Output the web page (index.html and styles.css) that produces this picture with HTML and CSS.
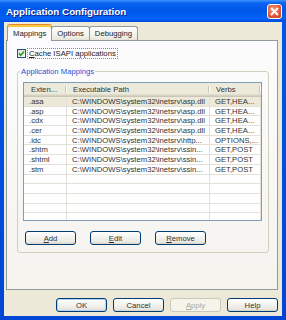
FILE: index.html
```html
<!DOCTYPE html>
<html lang="en">
<head>
    <meta charset="UTF-8">
    <meta name="viewport" content="width=device-width, initial-scale=1.0">
    <title>Application Configuration</title>
    <link rel="stylesheet" href="styles.css">
</head>
<body>
    <div class="window">
        <div class="titlebar">
            <span class="title">Application Configuration</span>
            <button class="close" type="button" aria-label="Close">
                <svg width="13" height="13" viewBox="0 0 13 13"><path d="M3.5 3.5 L9.5 9.5 M9.5 3.5 L3.5 9.5" stroke="#fff" stroke-width="1.8" stroke-linecap="round"/></svg>
            </button>
        </div>
        <div class="frame">
            <div class="tabs">
                <div class="tab active">Mappings</div>
                <div class="tab">Options</div>
                <div class="tab">Debugging</div>
            </div>
            <div class="panel">
                <div class="check">
                    <span class="box"><svg width="7" height="7" viewBox="0 0 7 7"><path d="M1 3.4 L2.8 5.3 L6 1.4" fill="none" stroke="#21a121" stroke-width="1.6"/></svg></span>
                    <span class="check-label"><u>C</u>ache ISAPI applications</span>
                </div>
                <fieldset class="group">
                    <legend>Application Mappings</legend>
                    <div class="list">
                        <div class="list-head">
                            <div class="hcell c1">Exten...</div>
                            <div class="hcell c2">Executable Path</div>
                            <div class="hcell c3">Verbs</div>
                        </div>
                        <div class="row selected">
                            <div class="cell c1">.asa</div>
                            <div class="cell c2">C:\WINDOWS\system32\inetsrv\asp.dll</div>
                            <div class="cell c3">GET,HEA...</div>
                        </div>
                        <div class="row">
                            <div class="cell c1">.asp</div>
                            <div class="cell c2">C:\WINDOWS\system32\inetsrv\asp.dll</div>
                            <div class="cell c3">GET,HEA...</div>
                        </div>
                        <div class="row">
                            <div class="cell c1">.cdx</div>
                            <div class="cell c2">C:\WINDOWS\system32\inetsrv\asp.dll</div>
                            <div class="cell c3">GET,HEA...</div>
                        </div>
                        <div class="row">
                            <div class="cell c1">.cer</div>
                            <div class="cell c2">C:\WINDOWS\system32\inetsrv\asp.dll</div>
                            <div class="cell c3">GET,HEA...</div>
                        </div>
                        <div class="row">
                            <div class="cell c1">.idc</div>
                            <div class="cell c2">C:\WINDOWS\system32\inetsrv\http...</div>
                            <div class="cell c3">OPTIONS,...</div>
                        </div>
                        <div class="row">
                            <div class="cell c1">.shtm</div>
                            <div class="cell c2">C:\WINDOWS\system32\inetsrv\ssin...</div>
                            <div class="cell c3">GET,POST</div>
                        </div>
                        <div class="row">
                            <div class="cell c1">.shtml</div>
                            <div class="cell c2">C:\WINDOWS\system32\inetsrv\ssin...</div>
                            <div class="cell c3">GET,POST</div>
                        </div>
                        <div class="row">
                            <div class="cell c1">.stm</div>
                            <div class="cell c2">C:\WINDOWS\system32\inetsrv\ssin...</div>
                            <div class="cell c3">GET,POST</div>
                        </div>
                        <div class="row"><div class="cell c1"></div><div class="cell c2"></div><div class="cell c3"></div></div>
                        <div class="row"><div class="cell c1"></div><div class="cell c2"></div><div class="cell c3"></div></div>
                        <div class="row"><div class="cell c1"></div><div class="cell c2"></div><div class="cell c3"></div></div>
                        <div class="row"><div class="cell c1"></div><div class="cell c2"></div><div class="cell c3"></div></div>
                        <div class="row"><div class="cell c1"></div><div class="cell c2"></div><div class="cell c3"></div></div>
                    </div>
                    <div class="group-buttons">
                        <button class="btn" type="button"><u>A</u>dd</button>
                        <button class="btn" type="button"><u>E</u>dit</button>
                        <button class="btn" type="button"><u>R</u>emove</button>
                    </div>
                </fieldset>
            </div>
            <div class="dialog-buttons">
                <button class="btn default" type="button">OK</button>
                <button class="btn" type="button">Cancel</button>
                <button class="btn" type="button" disabled><u>A</u>pply</button>
                <button class="btn" type="button">Help</button>
            </div>
        </div>
    </div>
</body>
</html>
```

FILE: styles.css
```css
body {
    margin: 0;
    font-family: "Liberation Sans", Arial, sans-serif;
    font-size: 7.7px;
    color: #222;
}
.window {
    width: 286px;
    height: 320px;
    display: flex;
    flex-direction: column;
    background: linear-gradient(#0058e8, #0046d6);
}
.titlebar {
    height: 22px;
    box-sizing: border-box;
    display: flex;
    align-items: center;
    justify-content: space-between;
    padding: 0 4px 0 6px;
    background: linear-gradient(#3d95ff 0, #0a62f2 14%, #0058e8 45%, #0062f6 85%, #004ade 100%);
}
.title {
    color: #fff;
    font-weight: bold;
    font-size: 9.8px;
    text-shadow: 1px 1px #0a1e8c;
}
.close {
    width: 15px;
    height: 15px;
    padding: 0;
    border: 1px solid #fff;
    border-radius: 3px;
    background: radial-gradient(circle at 40% 35%, #f0a084, #e2593b 55%, #c8391c);
    display: flex;
    align-items: center;
    justify-content: center;
}
.frame {
    flex: 1;
    margin: 0 4px 4px;
    background: #ece9d8;
    padding: 2px 4px 0 2px;
    display: flex;
    flex-direction: column;
}
.tabs {
    display: flex;
    align-items: flex-end;
    height: 16px;
    padding-left: 1px;
}
.tab {
    height: 14px;
    box-sizing: border-box;
    padding: 0 5px;
    border: 1px solid #919b9c;
    border-bottom: none;
    border-radius: 3px 3px 0 0;
    background: linear-gradient(#fefefe, #f1f0ea 70%, #e6e4d9);
    display: flex;
    align-items: center;
    margin-right: -1px;
}
.tab.active {
    height: 17px;
    margin-bottom: -1px;
    border-top-color: #e68b2c;
    box-shadow: inset 0 2px #ffc83c;
    background: #fcfcfe;
    z-index: 1;
}
.panel {
    height: 250px;
    box-sizing: border-box;
    border: 1px solid #919b9c;
    background: linear-gradient(#fcfcfe, #f4f3ee);
    padding: 7px 8px 0 10px;
}
.check {
    display: flex;
    align-items: center;
    height: 11px;
    gap: 1px;
}
.box {
    width: 9px;
    height: 9px;
    box-sizing: border-box;
    border: 1px solid #1c5180;
    background: linear-gradient(135deg, #dcdcd7, #fff);
    display: flex;
    align-items: center;
    justify-content: center;
}
.check-label {
    border: 1px dotted #888;
    padding: 0 1px;
    line-height: 9px;
}
.group {
    margin: 8px 0 0;
    padding: 6px 6px 7px 5px;
    border: 1px solid #d0d0bf;
    border-radius: 3px;
}
.group legend {
    color: #1a55d8;
    padding: 0 1px;
    margin-left: -3px;
    line-height: 9px;
}
.list {
    height: 139px;
    box-sizing: border-box;
    border: 1px solid #7f9db9;
    background: #fff;
    overflow: hidden;
}
.list-head {
    display: flex;
    height: 14px;
    background: #ebeadb;
    box-shadow: inset 0 -1px #cbc7b8, inset 0 -2px #d6d2c2, inset 0 -3px #e2decd;
}
.hcell {
    box-sizing: border-box;
    line-height: 13px;
    padding-left: 6px;
    white-space: nowrap;
    color: #333;
    background:
        linear-gradient(#c7c5b2, #c7c5b2) no-repeat right 1px top 3px / 1px 7px,
        linear-gradient(#fff, #fff) no-repeat right 0 top 3px / 1px 7px;
}
.hcell.c1 {
    padding-left: 7px;
}
.row {
    display: flex;
    height: 9.7px;
}
.cell {
    box-sizing: border-box;
    border-right: 1px solid #e3e1d7;
    border-bottom: 1px solid #e3e1d7;
    padding-left: 5px;
    white-space: nowrap;
    overflow: hidden;
    line-height: 9px;
    color: #333;
}
.row.selected .cell {
    background: #ece9d8;
}
.c1 {
    width: 43px;
}
.c2 {
    width: 143px;
}
.c3 {
    flex: 1;
}
.group-buttons {
    display: flex;
    gap: 14px;
    margin-top: 10px;
    padding-left: 2px;
}
.dialog-buttons {
    display: flex;
    justify-content: flex-end;
    gap: 6px;
    margin-top: 8px;
}
.btn {
    width: 51px;
    height: 14px;
    padding: 0;
    font: inherit;
    color: #333;
    border: 1px solid #003c74;
    border-radius: 3px;
    background: linear-gradient(#fff, #f3f3ef 45%, #e8e7e0 85%, #d6d0c5);
}
.btn.default {
    box-shadow: inset 0 0 0 1px #b8d0f4;
}
.btn:disabled {
    border-color: #c9c7ba;
    color: #aca899;
    background: #f5f4ea;
}
```
